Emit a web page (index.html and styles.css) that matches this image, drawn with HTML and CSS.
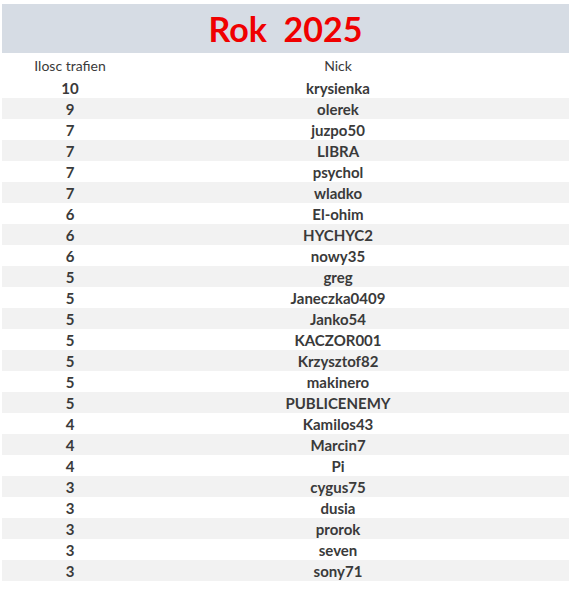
FILE: index.html
```html
<!DOCTYPE html>
<html>
<head>
<meta charset="utf-8">
<link rel="stylesheet" href="styles.css">
</head>
<body>
<div class="sheet">
  <div class="title">Rok&nbsp; 2025</div>
  <div class="row head"><div class="c1">Ilosc trafien</div><div class="c2">Nick</div><div></div></div>
  <div class="row"><div class="c1">10</div><div class="c2">krysienka</div><div></div></div>
  <div class="row alt"><div class="c1">9</div><div class="c2">olerek</div><div></div></div>
  <div class="row"><div class="c1">7</div><div class="c2">juzpo50</div><div></div></div>
  <div class="row alt"><div class="c1">7</div><div class="c2">LIBRA</div><div></div></div>
  <div class="row"><div class="c1">7</div><div class="c2">psychol</div><div></div></div>
  <div class="row alt"><div class="c1">7</div><div class="c2">wladko</div><div></div></div>
  <div class="row"><div class="c1">6</div><div class="c2">El-ohim</div><div></div></div>
  <div class="row alt"><div class="c1">6</div><div class="c2">HYCHYC2</div><div></div></div>
  <div class="row"><div class="c1">6</div><div class="c2">nowy35</div><div></div></div>
  <div class="row alt"><div class="c1">5</div><div class="c2">greg</div><div></div></div>
  <div class="row"><div class="c1">5</div><div class="c2">Janeczka0409</div><div></div></div>
  <div class="row alt"><div class="c1">5</div><div class="c2">Janko54</div><div></div></div>
  <div class="row"><div class="c1">5</div><div class="c2">KACZOR001</div><div></div></div>
  <div class="row alt"><div class="c1">5</div><div class="c2">Krzysztof82</div><div></div></div>
  <div class="row"><div class="c1">5</div><div class="c2">makinero</div><div></div></div>
  <div class="row alt"><div class="c1">5</div><div class="c2">PUBLICENEMY</div><div></div></div>
  <div class="row"><div class="c1">4</div><div class="c2">Kamilos43</div><div></div></div>
  <div class="row alt"><div class="c1">4</div><div class="c2">Marcin7</div><div></div></div>
  <div class="row"><div class="c1">4</div><div class="c2">Pi</div><div></div></div>
  <div class="row alt"><div class="c1">3</div><div class="c2">cygus75</div><div></div></div>
  <div class="row"><div class="c1">3</div><div class="c2">dusia</div><div></div></div>
  <div class="row alt"><div class="c1">3</div><div class="c2">prorok</div><div></div></div>
  <div class="row"><div class="c1">3</div><div class="c2">seven</div><div></div></div>
  <div class="row alt"><div class="c1">3</div><div class="c2">sony71</div><div></div></div>
</div>
</body>
</html>
```
FILE: styles.css
```css
html, body {
  margin: 0;
  padding: 0;
  background: #ffffff;
}
body {
  font-family: Lato, "Open Sans", sans-serif;
  color: #3a3a3a;
}
.sheet {
  margin: 4px 0 0 2px;
  width: 567px;
}
.title {
  height: 49px;
  background: #d6dce4;
  color: #f00000;
  font-weight: 700;
  font-size: 34px;
  line-height: 49px;
  text-align: center;
}
.row {
  display: grid;
  grid-template-columns: 136px 400px 1fr;
  height: 21px;
  align-items: center;
  font-size: 15px;
  font-weight: 700;
}
.row.head {
  height: 24px;
  font-size: 14px;
  font-weight: 400;
}
.row.alt {
  background: #f2f2f2;
}
.c1, .c2 {
  text-align: center;
}
```
